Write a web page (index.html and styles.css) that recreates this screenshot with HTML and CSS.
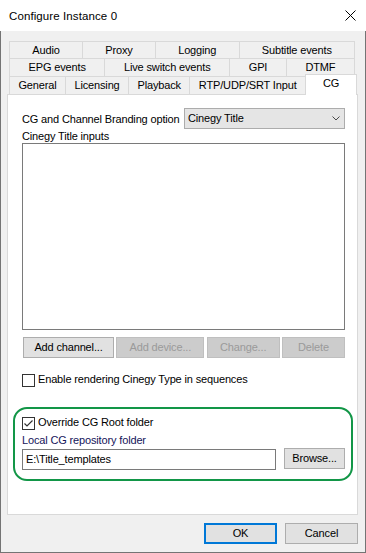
FILE: index.html
```html
<!DOCTYPE html>
<html>
<head>
<meta charset="utf-8">
<title>Configure Instance 0</title>
<link rel="stylesheet" href="styles.css">
</head>
<body>
<div class="window">
  <div class="titlebar">
    <span class="title">Configure Instance 0</span>
    <svg class="close" width="11" height="11" viewBox="0 0 11 11"><path d="M0.5 0.5 L10.5 10.5 M10.5 0.5 L0.5 10.5" stroke="#000" stroke-width="1" fill="none"/></svg>
  </div>
  <div class="client">
    <div class="tabs">
      <div class="tabrow r1">
        <div class="tab">Audio</div>
        <div class="tab">Proxy</div>
        <div class="tab">Logging</div>
        <div class="tab">Subtitle events</div>
      </div>
      <div class="tabrow r2">
        <div class="tab">EPG events</div>
        <div class="tab">Live switch events</div>
        <div class="tab">GPI</div>
        <div class="tab">DTMF</div>
      </div>
      <div class="tabrow r3">
        <div class="tab">General</div>
        <div class="tab">Licensing</div>
        <div class="tab">Playback</div>
        <div class="tab">RTP/UDP/SRT Input</div>
        <div class="tab sel">CG</div>
      </div>
    </div>
    <div class="panel">
      <div class="row-opt">
        <span>CG and Channel Branding option</span>
        <div class="combo">
          <span>Cinegy Title</span>
          <svg class="chev" width="8" height="5" viewBox="0 0 8 5"><path d="M0.5 0.5 L4 4 L7.5 0.5" stroke="#4a4a4a" stroke-width="1" fill="none"/></svg>
        </div>
      </div>
      <div class="lbl">Cinegy Title inputs</div>
      <div class="list"></div>
      <div class="btnrow">
        <div class="btn b-addch">Add channel...</div>
        <div class="btn dis b-adddev">Add device...</div>
        <div class="btn dis b-change">Change...</div>
        <div class="btn dis b-delete">Delete</div>
      </div>
      <div class="check-row first">
        <div class="cb"></div>
        <span class="cb-text">Enable rendering Cinegy Type in sequences</span>
      </div>
      <div class="group">
        <div class="check-row">
          <div class="cb"><svg width="11" height="11" viewBox="0 0 11 11"><path d="M1.5 5.5 L4 8 L9.5 2.5" stroke="#333" stroke-width="1.2" fill="none"/></svg></div>
          <span class="cb-text">Override CG Root folder</span>
        </div>
        <div class="lbl2">Local CG repository folder</div>
        <div class="inrow">
          <div class="input">E:\Title_templates</div>
          <div class="btn b-browse">Browse...</div>
        </div>
      </div>
    </div>
    <div class="dlg">
      <div class="btn ok">OK</div>
      <div class="btn cancel">Cancel</div>
    </div>
  </div>
</div>
</body>
</html>
```
FILE: styles.css
```css
* { box-sizing: border-box; }
html, body { margin: 0; padding: 0; }
body {
  width: 366px;
  height: 553px;
  overflow: hidden;
  background: #fff;
  font-family: "Liberation Sans", Arial, sans-serif;
  font-size: 11px;
  letter-spacing: -0.15px;
  color: #000;
}
.window { width: 366px; height: 553px; display: flex; flex-direction: column; }
.titlebar {
  height: 31px; flex: none; display: flex; align-items: center;
  padding-left: 9px; background: #fff;
}
.title { font-size: 11.5px; letter-spacing: 0.1px; }
.close { display: block; margin-left: auto; margin-right: 10px; }
.client {
  flex: 1; display: flex; flex-direction: column;
  background: #f0f0f0;
  border: 1px solid #747474; border-top: 0;
  padding-top: 10px;
}
.tabs { margin-left: 8px; width: 348px; }
.tabrow { display: flex; }
.r1 { height: 17px; width: 346px; }
.r2 { height: 18px; width: 346px; }
.r3 { height: 18px; width: 348px; }
.tab {
  flex: 1 1 auto;
  border: 1px solid #d9d9d9; border-bottom: 0;
  background: #f0f0f0;
  text-align: center; white-space: nowrap;
  padding: 0 4px;
  margin-left: -1px;
}
.tab:first-child { margin-left: 0; }
.r1 .tab { line-height: 16px; }
.r2 .tab, .r3 .tab { line-height: 17px; }
.tab.sel {
  flex: 0 0 52px;
  margin-top: -2px; height: 21px;
  padding-bottom: 3px;
  background: #fff;
  position: relative; z-index: 1;
}
.panel {
  margin-left: 6px; width: 351px; height: 421px;
  border: 1px solid #d9d9d9; background: #fff;
  padding: 13px 12px 0 14px;
  display: flex; flex-direction: column;
}
.row-opt { display: flex; height: 21px; align-items: center; justify-content: space-between; }
.combo {
  width: 161px; height: 21px;
  border: 1px solid #acacac; background: #e5e5e5;
  display: flex; align-items: center;
  padding: 0 4px 0 3px; line-height: 19px;
}
.chev { display: block; margin-left: auto; margin-bottom: 1px; }
.lbl { height: 14px; line-height: 14px; }
.list { height: 187px; flex: none; border: 1px solid #7a7a7a; background: #fff; }
.btnrow { display: flex; justify-content: space-between; margin: 7px 0 0 1px; }
.btn {
  height: 21px; flex: none;
  border: 1px solid #adadad; background: #e1e1e1;
  line-height: 19px; text-align: center; white-space: nowrap;
}
.btn.dis { background: #cccccc; border-color: #bfbfbf; color: #9a9a9a; }
.b-addch { width: 91px; }
.b-adddev { width: 88px; }
.b-change { width: 73px; }
.b-delete { width: 63px; }
.check-row { display: flex; align-items: flex-start; height: 13px; }
.check-row.first { margin-top: 16px; }
.cb { width: 13px; height: 13px; flex: none; border: 1px solid #333; background: #fff; }
.cb svg { display: block; }
.cb-text { line-height: 13px; margin: -1px 0 0 3px; white-space: nowrap; }
.group {
  margin: 20px -8px 0 -9px;
  border: 2px solid #129647; border-radius: 14px;
  padding: 8px 6px 9px 7px;
}
.lbl2 { margin-top: 3px; line-height: 14px; color: #14145a; }
.inrow { display: flex; align-items: flex-start; justify-content: space-between; margin-top: 1px; }
.input {
  width: 254px; height: 21px; margin-top: 1px;
  border: 1px solid #7a7a7a; background: #fff;
  padding-left: 3px; line-height: 19px; white-space: nowrap;
}
.b-browse { width: 61px; }
.dlg { display: flex; justify-content: flex-end; gap: 8px; margin: 8px 7px 0 0; }
.ok { width: 73px; border: 2px solid #0078d7; line-height: 17px; }
.cancel { width: 73px; }
```
